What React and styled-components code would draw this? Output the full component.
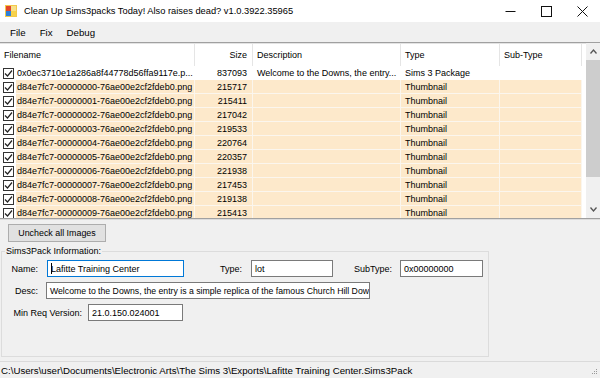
import React from 'react';
import styled, { createGlobalStyle } from 'styled-components';

const GlobalStyle = createGlobalStyle`
  html, body {
    margin: 0;
    padding: 0;
    background: #f0f0f0;
    overflow: hidden;
  }
  * {
    box-sizing: border-box;
  }
`;

const Window = styled.div`
  width: 600px;
  height: 378px;
  display: flex;
  flex-direction: column;
  font-family: 'Liberation Sans', Arial, sans-serif;
  font-size: 9px;
  color: #000;
  background: #f0f0f0;
  overflow: hidden;
`;

const TitleBar = styled.div`
  height: 22px;
  display: flex;
  align-items: center;
  background: #ffffff;
  padding-left: 5px;
`;

const TitleText = styled.span`
  margin-left: 7px;
  font-size: 9.3px;
  flex: 1;
`;

const Controls = styled.div`
  display: flex;
  align-items: center;
  height: 100%;
`;

const ControlButton = styled.div`
  width: 36px;
  height: 100%;
  display: flex;
  align-items: center;
  justify-content: center;
`;

const MenuBar = styled.div`
  height: 20px;
  display: flex;
  align-items: center;
  padding-left: 3px;
  background: #f0f0f0;
`;

const MenuItem = styled.span`
  padding: 0 7px;
  font-size: 9.7px;
`;

const ListView = styled.div`
  height: 177px;
  display: flex;
  background: #ffffff;
  border-top: 1px solid #a0a0a0;
  border-bottom: 1px solid #a0a0a0;
  box-shadow: inset 0 1px 0 #e3e3e3;
`;

const ListBody = styled.div`
  flex: 1;
  overflow: hidden;
  padding-top: 1px;
`;

const cols = '16px 179px 58px 148px 99px 82px';

const HeaderRow = styled.div`
  display: grid;
  grid-template-columns: ${cols};
  height: 22px;
  align-items: center;
`;

const HeaderCell = styled.div`
  height: 100%;
  display: flex;
  align-items: center;
  justify-content: ${p => (p.$right ? 'flex-end' : 'flex-start')};
  padding: 0 5px 0 4px;
  border-right: ${p => (p.$divider ? '1px solid #e5e5e5' : 'none')};
  grid-column: ${p => p.$span || 'auto'};
`;

const Row = styled.div`
  display: grid;
  grid-template-columns: ${cols};
  height: 14px;
`;

const CheckCell = styled.div`
  display: flex;
  align-items: center;
  padding-left: 3px;
  background: #ffffff;
`;

const Cell = styled.div`
  display: flex;
  align-items: center;
  justify-content: ${p => (p.$right ? 'flex-end' : 'flex-start')};
  padding: 0 5px 0 ${p => (p.$first ? '1px' : '4px')};
  background: ${p => (p.$hl ? '#fde9cb' : '#ffffff')};
  border-right: 1px solid ${p => (p.$hl ? '#fbf6ee' : '#ffffff')};
  border-bottom: 1px solid ${p => (p.$hl ? '#fbf6ee' : '#ffffff')};
  white-space: nowrap;
  overflow: hidden;
`;

const CheckBox = styled.div`
  width: 11px;
  height: 11px;
  border: 1px solid #333;
  background: #fff;
  display: flex;
  align-items: center;
  justify-content: center;
`;

const ScrollBar = styled.div`
  width: 14px;
  margin-left: 4px;
  background: #f0f0f0;
  display: flex;
  flex-direction: column;
  align-items: center;
`;

const ScrollArrow = styled.div`
  height: 17px;
  width: 100%;
  display: flex;
  align-items: center;
  justify-content: center;
`;

const ScrollTrack = styled.div`
  flex: 1;
  width: 100%;
  display: flex;
  flex-direction: column;
`;

const ScrollThumb = styled.div`
  height: 117px;
  width: 100%;
  background: #cdcdcd;
`;

const Splitter = styled.div`
  height: 1px;
  background: #dcdcdc;
`;

const BottomPanel = styled.div`
  flex: 1;
  display: flex;
  flex-direction: column;
  padding: 4px 0 0 1px;
`;

const Button = styled.button`
  width: 98px;
  height: 18px;
  margin-left: 7px;
  background: #e1e1e1;
  border: 1px solid #adadad;
  font-family: inherit;
  font-size: 8.9px;
  color: #000;
  padding: 0;
`;

const GroupBox = styled.fieldset`
  width: 488px;
  height: 111px;
  margin: 4px 0 0 0;
  padding: 4px 0 0 1px;
  border: 1px solid #dcdcdc;
  display: flex;
  flex-direction: column;
  gap: 5px;
`;

const Legend = styled.legend`
  padding: 0 1px;
  margin-left: 2px;
  font-size: 9px;
`;

const FormRow = styled.div`
  display: flex;
  align-items: center;
  height: 17px;
`;

const Label = styled.span`
  width: ${p => p.$w}px;
  text-align: right;
  font-size: 9px;
`;

const TextBox = styled.div`
  width: ${p => p.$w}px;
  height: 17px;
  margin-left: ${p => p.$ml}px;
  background: #fff;
  border: 1px solid ${p => (p.$focus ? '#0078d7' : '#7a7a7a')};
  display: flex;
  align-items: center;
  padding-left: 3px;
  font-size: ${p => p.$fs || 9}px;
  white-space: nowrap;
  overflow: hidden;
`;

const Caret = styled.span`
  display: inline-block;
  width: 1px;
  height: 11px;
  background: #000;
  margin-right: -1px;
`;

const StatusBar = styled.div`
  height: 17px;
  border-top: 1px solid #dadada;
  display: flex;
  align-items: center;
  justify-content: space-between;
  padding-left: 1px;
  font-size: 9.7px;
`;

const Grip = styled.svg`
  margin-right: 2px;
  margin-top: 4px;
`;

const CheckIcon = () => (
  <svg width="9" height="9" viewBox="0 0 9 9">
    <path d="M1 4.5 L3.5 7 L8 1.5" fill="none" stroke="#222" strokeWidth="1.2" />
  </svg>
);

const AppIcon = () => (
  <svg width="12" height="12" viewBox="0 0 12 12">
    <rect x="0" y="0" width="12" height="12" fill="#f3c94a" />
    <rect x="1" y="1" width="5" height="5" fill="#e2452a" />
    <rect x="6" y="1" width="5" height="5" fill="#f7e08a" />
    <rect x="1" y="6" width="5" height="5" fill="#2f7fd8" />
    <rect x="6" y="6" width="5" height="5" fill="#f7d24a" />
  </svg>
);

const rows = [
  {
    name: '0x0ec3710e1a286a8f44778d56ffa9117e.p...',
    size: '837093',
    desc: 'Welcome to the Downs, the entry...',
    type: 'Sims 3 Package',
    hl: false,
  },
  ...['215717', '215411', '217042', '219533', '220764', '220357', '221938', '217453', '219138', '215413'].map(
    (size, i) => ({
      name: `d84e7fc7-0000000${i}-76ae00e2cf2fdeb0.png`,
      size,
      desc: '',
      type: 'Thumbnail',
      hl: true,
    })
  ),
];

export default function App() {
  return (
    <>
      <GlobalStyle />
      <Window>
        <TitleBar>
          <AppIcon />
          <TitleText>Clean Up Sims3packs Today! Also raises dead? v1.0.3922.35965</TitleText>
          <Controls>
            <ControlButton>
              <svg width="11" height="11" viewBox="0 0 11 11">
                <path d="M0.5 5.5 H10.5" stroke="#111" strokeWidth="1" />
              </svg>
            </ControlButton>
            <ControlButton>
              <svg width="11" height="11" viewBox="0 0 11 11">
                <rect x="0.5" y="0.5" width="10" height="10" fill="none" stroke="#111" strokeWidth="1" />
              </svg>
            </ControlButton>
            <ControlButton>
              <svg width="11" height="11" viewBox="0 0 11 11">
                <path d="M0.5 0.5 L10.5 10.5 M10.5 0.5 L0.5 10.5" stroke="#111" strokeWidth="1" />
              </svg>
            </ControlButton>
          </Controls>
        </TitleBar>
        <MenuBar>
          <MenuItem>File</MenuItem>
          <MenuItem>Fix</MenuItem>
          <MenuItem>Debug</MenuItem>
        </MenuBar>
        <ListView>
          <ListBody>
            <HeaderRow>
              <HeaderCell $span="1 / 3" $divider>Filename</HeaderCell>
              <HeaderCell $right $divider>Size</HeaderCell>
              <HeaderCell $divider>Description</HeaderCell>
              <HeaderCell $divider>Type</HeaderCell>
              <HeaderCell $divider>Sub-Type</HeaderCell>
            </HeaderRow>
            {rows.map((r, i) => (
              <Row key={i}>
                <CheckCell>
                  <CheckBox>
                    <CheckIcon />
                  </CheckBox>
                </CheckCell>
                <Cell $hl={r.hl} $first>{r.name}</Cell>
                <Cell $hl={r.hl} $right>{r.size}</Cell>
                <Cell $hl={r.hl}>{r.desc}</Cell>
                <Cell $hl={r.hl}>{r.type}</Cell>
                <Cell $hl={r.hl}></Cell>
              </Row>
            ))}
          </ListBody>
          <ScrollBar>
            <ScrollArrow>
              <svg width="7" height="5" viewBox="0 0 7 5">
                <path d="M0.5 4.5 L3.5 1 L6.5 4.5" fill="none" stroke="#555" strokeWidth="1.3" />
              </svg>
            </ScrollArrow>
            <ScrollTrack>
              <ScrollThumb />
            </ScrollTrack>
            <ScrollArrow>
              <svg width="7" height="5" viewBox="0 0 7 5">
                <path d="M0.5 0.5 L3.5 4 L6.5 0.5" fill="none" stroke="#555" strokeWidth="1.3" />
              </svg>
            </ScrollArrow>
          </ScrollBar>
        </ListView>
        <Splitter />
        <BottomPanel>
          <Button>Uncheck all Images</Button>
          <GroupBox>
            <Legend>Sims3Pack Information:</Legend>
            <FormRow>
              <Label $w={35}>Name:</Label>
              <TextBox $w={137} $ml={9} $focus>
                <Caret />Lafitte Training Center
              </TextBox>
              <Label $w={58}>Type:</Label>
              <TextBox $w={82} $ml={9}>lot</TextBox>
              <Label $w={59}>SubType:</Label>
              <TextBox $w={83} $ml={8}>0x00000000</TextBox>
            </FormRow>
            <FormRow>
              <Label $w={35}>Desc:</Label>
              <TextBox $w={324} $ml={8} $fs={8.7}>
                Welcome to the Downs, the entry is a simple replica of the famous Church Hill Dow
              </TextBox>
            </FormRow>
            <FormRow>
              <Label $w={79}>Min Req Version:</Label>
              <TextBox $w={95} $ml={6}>21.0.150.024001</TextBox>
            </FormRow>
          </GroupBox>
        </BottomPanel>
        <StatusBar>
          <span>C:\Users\user\Documents\Electronic Arts\The Sims 3\Exports\Lafitte Training Center.Sims3Pack</span>
          <Grip width="10" height="10" viewBox="0 0 10 10">
            <rect x="8" y="2" width="1" height="1" fill="#999" />
            <rect x="6" y="4" width="1" height="1" fill="#999" />
            <rect x="8" y="4" width="1" height="1" fill="#999" />
            <rect x="4" y="6" width="1" height="1" fill="#999" />
            <rect x="6" y="6" width="1" height="1" fill="#999" />
            <rect x="8" y="6" width="1" height="1" fill="#999" />
          </Grip>
        </StatusBar>
      </Window>
    </>
  );
}
